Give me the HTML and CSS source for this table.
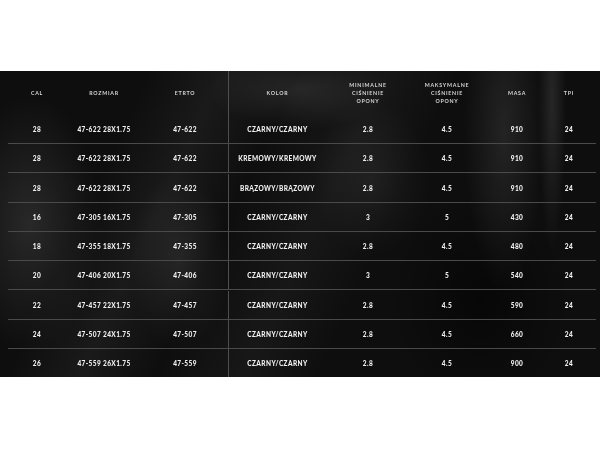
FILE: index.html
```html
<!DOCTYPE html>
<html lang="pl">
<head>
<meta charset="utf-8">
<title>Tabela rozmiarów</title>
<link rel="stylesheet" href="styles.css">
</head>
<body>
<div class="page">
  <section class="sizes">
    <div class="row head">
      <div class="cell">CAL</div>
      <div class="cell">ROZMIAR</div>
      <div class="cell">ETRTO</div>
      <div class="cell split">KOLOR</div>
      <div class="cell">MINIMALNE<br>CIŚNIENIE<br>OPONY</div>
      <div class="cell">MAKSYMALNE<br>CIŚNIENIE<br>OPONY</div>
      <div class="cell">MASA</div>
      <div class="cell tpi">TPI</div>
    </div>
    <div class="row">
      <div class="cell">28</div><div class="cell">47-622 28X1.75</div><div class="cell">47-622</div><div class="cell split">CZARNY/CZARNY</div><div class="cell">2.8</div><div class="cell">4.5</div><div class="cell">910</div><div class="cell tpi">24</div>
    </div>
    <div class="row">
      <div class="cell">28</div><div class="cell">47-622 28X1.75</div><div class="cell">47-622</div><div class="cell split">KREMOWY/KREMOWY</div><div class="cell">2.8</div><div class="cell">4.5</div><div class="cell">910</div><div class="cell tpi">24</div>
    </div>
    <div class="row">
      <div class="cell">28</div><div class="cell">47-622 28X1.75</div><div class="cell">47-622</div><div class="cell split">BRĄZOWY/BRĄZOWY</div><div class="cell">2.8</div><div class="cell">4.5</div><div class="cell">910</div><div class="cell tpi">24</div>
    </div>
    <div class="row">
      <div class="cell">16</div><div class="cell">47-305 16X1.75</div><div class="cell">47-305</div><div class="cell split">CZARNY/CZARNY</div><div class="cell">3</div><div class="cell">5</div><div class="cell">430</div><div class="cell tpi">24</div>
    </div>
    <div class="row">
      <div class="cell">18</div><div class="cell">47-355 18X1.75</div><div class="cell">47-355</div><div class="cell split">CZARNY/CZARNY</div><div class="cell">2.8</div><div class="cell">4.5</div><div class="cell">480</div><div class="cell tpi">24</div>
    </div>
    <div class="row">
      <div class="cell">20</div><div class="cell">47-406 20X1.75</div><div class="cell">47-406</div><div class="cell split">CZARNY/CZARNY</div><div class="cell">3</div><div class="cell">5</div><div class="cell">540</div><div class="cell tpi">24</div>
    </div>
    <div class="row">
      <div class="cell">22</div><div class="cell">47-457 22X1.75</div><div class="cell">47-457</div><div class="cell split">CZARNY/CZARNY</div><div class="cell">2.8</div><div class="cell">4.5</div><div class="cell">590</div><div class="cell tpi">24</div>
    </div>
    <div class="row">
      <div class="cell">24</div><div class="cell">47-507 24X1.75</div><div class="cell">47-507</div><div class="cell split">CZARNY/CZARNY</div><div class="cell">2.8</div><div class="cell">4.5</div><div class="cell">660</div><div class="cell tpi">24</div>
    </div>
    <div class="row last">
      <div class="cell">26</div><div class="cell">47-559 26X1.75</div><div class="cell">47-559</div><div class="cell split">CZARNY/CZARNY</div><div class="cell">2.8</div><div class="cell">4.5</div><div class="cell">900</div><div class="cell tpi">24</div>
    </div>
  </section>
</div>
</body>
</html>
```

FILE: styles.css
```css
html, body {
  margin: 0;
  padding: 0;
  background: #ffffff;
}

.page {
  width: 600px;
  height: 450px;
  padding-top: 71px;
  box-sizing: border-box;
}

.sizes {
  height: 306px;
  background-color: #0e0e0e;
  background-image:
    radial-gradient(ellipse 14px 150px at 92% 10%, rgba(255,255,255,0.10), rgba(255,255,255,0) 100%),
    radial-gradient(ellipse 40px 160px at 84% 20%, rgba(255,255,255,0.09), rgba(255,255,255,0) 100%),
    radial-gradient(ellipse 90px 40px at 50% 6%, rgba(255,255,255,0.10), rgba(255,255,255,0) 100%),
    radial-gradient(ellipse 70px 130px at 5% 50%, rgba(255,255,255,0.11), rgba(255,255,255,0) 100%),
    radial-gradient(ellipse 50px 90px at 30% 62%, rgba(255,255,255,0.08), rgba(255,255,255,0) 100%),
    radial-gradient(ellipse 60px 80px at 62% 35%, rgba(255,255,255,0.06), rgba(255,255,255,0) 100%),
    radial-gradient(ellipse 90px 110px at 80% 75%, rgba(0,0,0,0.5), rgba(0,0,0,0) 100%),
    linear-gradient(115deg, rgba(255,255,255,0) 20%, rgba(255,255,255,0.05) 30%, rgba(255,255,255,0) 40%, rgba(255,255,255,0.04) 52%, rgba(255,255,255,0) 62%);
  font-family: "Lato", "Liberation Sans", sans-serif;
  color: #f2f2f2;
}

.row {
  display: grid;
  grid-template-columns: 58px 76px 86px 98px 84px 74px 66px 46px;
  margin: 0 4px 0 8px;
  height: 29.3px;
  box-sizing: border-box;
  border-bottom: 1px solid #4a4a4a;
  font-size: 6.5px;
  font-weight: 900;
  letter-spacing: 0.4px;
  will-change: transform;
}

.row.head {
  height: 44px;
  border-bottom: none;
  font-size: 5.3px;
  font-weight: 700;
  letter-spacing: 0.75px;
  line-height: 8px;
  color: #d6d6d6;
}

.row.last {
  height: 28px;
  border-bottom: none;
}

.cell {
  display: flex;
  align-items: center;
  justify-content: center;
  text-align: center;
}

.cell.split {
  border-left: 1px solid #4e4e4e;
}

.cell.tpi {
  padding-right: 8px;
}
```
